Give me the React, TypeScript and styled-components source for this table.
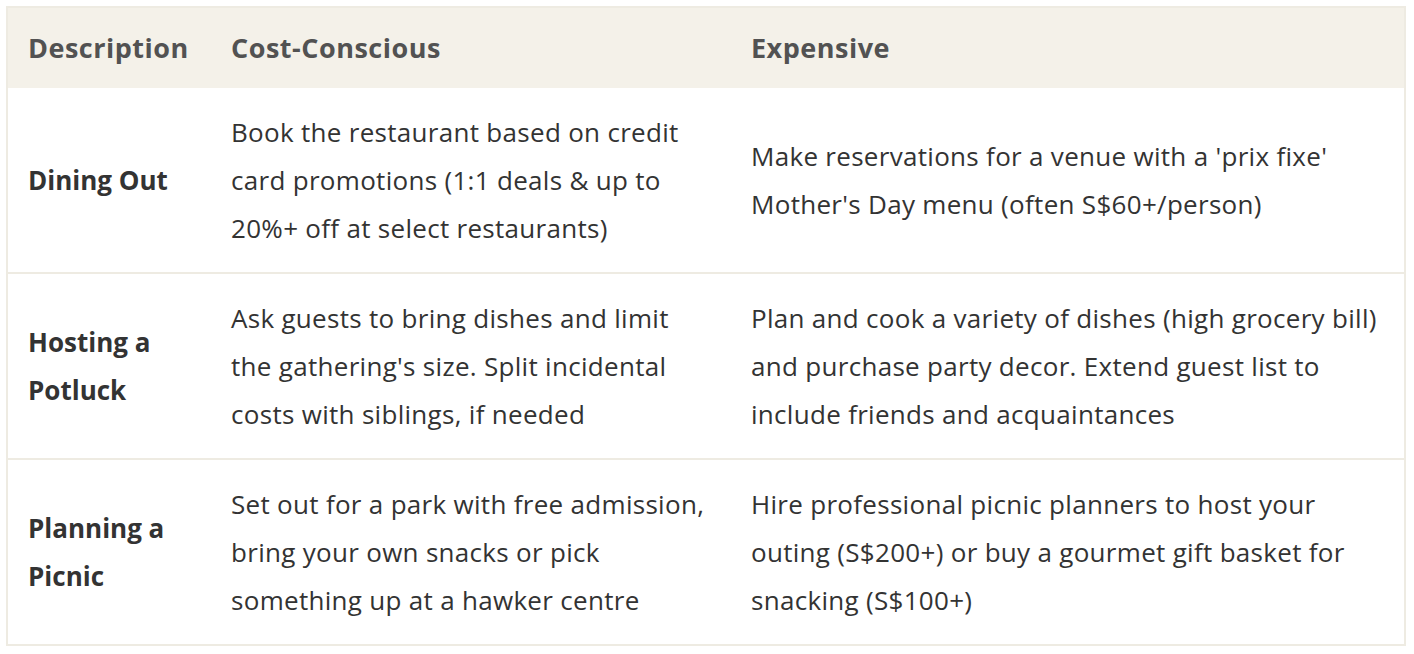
import React from "react";
import styled, { createGlobalStyle } from "styled-components";

type Row = {
  description: string;
  cheap: string;
  expensive: string;
};

const rows: Row[] = [
  {
    description: "Dining Out",
    cheap:
      "Book the restaurant based on credit card promotions (1:1 deals & up to 20%+ off at select restaurants)",
    expensive:
      "Make reservations for a venue with a 'prix fixe' Mother's Day menu (often S$60+/person)",
  },
  {
    description: "Hosting a Potluck",
    cheap:
      "Ask guests to bring dishes and limit the gathering's size. Split incidental costs with siblings, if needed",
    expensive:
      "Plan and cook a variety of dishes (high grocery bill) and purchase party decor. Extend guest list to include friends and acquaintances",
  },
  {
    description: "Planning a Picnic",
    cheap:
      "Set out for a park with free admission, bring your own snacks or pick something up at a hawker centre",
    expensive:
      "Hire professional picnic planners to host your outing (S$200+) or buy a gourmet gift basket for snacking (S$100+)",
  },
];

export default function App() {
  return (
    <>
      <GlobalStyle />
      <Page>
        <Table>
          <colgroup>
            <col style={{ width: 204 }} />
            <col style={{ width: 520 }} />
            <col />
          </colgroup>
          <thead>
            <tr>
              <HeadCell>Description</HeadCell>
              <HeadCell>Cost-Conscious</HeadCell>
              <HeadCell>Expensive</HeadCell>
            </tr>
          </thead>
          <tbody>
            {rows.map((row) => (
              <BodyRow key={row.description}>
                <LabelCell>{row.description}</LabelCell>
                <Cell>{row.cheap}</Cell>
                <Cell>{row.expensive}</Cell>
              </BodyRow>
            ))}
          </tbody>
        </Table>
      </Page>
    </>
  );
}

const GlobalStyle = createGlobalStyle`
  body {
    margin: 0;
    background: #ffffff;
    font-family: "Open Sans", "Noto Sans", sans-serif;
  }
`;

const Page = styled.div`
  padding: 6px 8px 8px 6px;
`;

const Table = styled.table`
  width: 1400px;
  border-collapse: collapse;
  table-layout: fixed;
  border: 2px solid #eeebe2;
`;

const HeadCell = styled.th`
  background: #f4f1e9;
  color: #525252;
  font-size: 27px;
  font-weight: 700;
  line-height: 48px;
  text-align: left;
  padding: 16px 20px;
  letter-spacing: 0.5px;
`;

const BodyRow = styled.tr`
  border-top: 2px solid #eeebe2;

  &:first-child {
    border-top: none;
  }
`;

const Cell = styled.td`
  color: #333333;
  font-size: 26px;
  line-height: 48px;
  padding: 20px;
  vertical-align: middle;
  letter-spacing: 0.3px;
`;

const LabelCell = styled(Cell)`
  font-weight: 700;
  letter-spacing: 0;
`;
